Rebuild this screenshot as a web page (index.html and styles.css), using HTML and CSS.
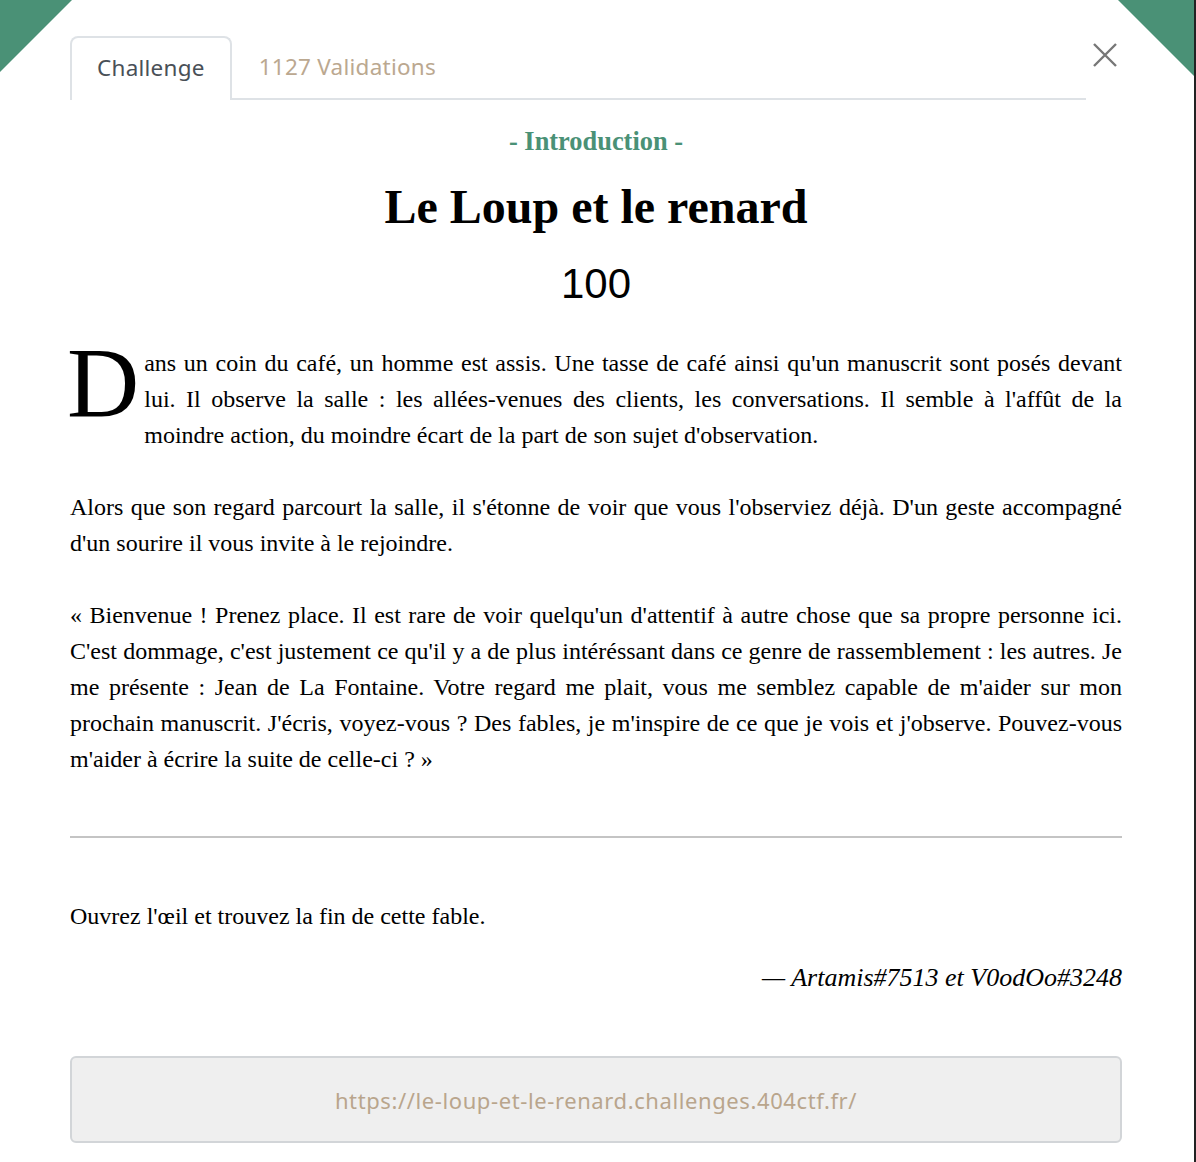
FILE: index.html
```html
<!DOCTYPE html>
<html lang="fr">
<head>
<meta charset="utf-8">
<link rel="stylesheet" href="styles.css">
</head>
<body>
<div class="page">
  <div class="corner corner-left"></div>
  <div class="corner corner-right"></div>
  <div class="modal">
    <div class="header">
      <ul class="tabs">
        <li class="tab active">Challenge</li>
        <li class="tab">1127 Validations</li>
      </ul>
      <button class="close" aria-label="Fermer">
        <svg width="26" height="26" viewBox="0 0 26 26"><path d="M2 2 L24 24 M24 2 L2 24" stroke="#777" stroke-width="2.4" fill="none"/></svg>
      </button>
    </div>
    <div class="category">- Introduction -</div>
    <h1 class="title">Le Loup et le renard</h1>
    <div class="points">100</div>
    <div class="story">
      <p class="first"><span class="dropcap">D</span>ans un coin du café, un homme est assis. Une tasse de café ainsi qu'un manuscrit sont posés devant lui. Il observe la salle : les allées-venues des clients, les conversations. Il semble à l'affût de la moindre action, du moindre écart de la part de son sujet d'observation.</p>
      <p>Alors que son regard parcourt la salle, il s'étonne de voir que vous l'observiez déjà. D'un geste accompagné d'un sourire il vous invite à le rejoindre.</p>
      <p>« Bienvenue ! Prenez place. Il est rare de voir quelqu'un d'attentif à autre chose que sa propre personne ici. C'est dommage, c'est justement ce qu'il y a de plus intéréssant dans ce genre de rassemblement : les autres. Je me présente : Jean de La Fontaine. Votre regard me plait, vous me semblez capable de m'aider sur mon prochain manuscrit. J'écris, voyez-vous ? Des fables, je m'inspire de ce que je vois et j'observe. Pouvez-vous m'aider à écrire la suite de celle-ci ? »</p>
    </div>
    <hr class="sep">
    <p class="task">Ouvrez l'œil et trouvez la fin de cette fable.</p>
    <p class="author">— Artamis#7513 et V0odOo#3248</p>
    <div class="link">https://le-loup-et-le-renard.challenges.404ctf.fr/</div>
  </div>
</div>
</body>
</html>
```

FILE: styles.css
```css
html, body {
  margin: 0;
  padding: 0;
  background: #fff;
}
.page {
  position: relative;
  width: 1196px;
  height: 1162px;
  overflow: hidden;
  box-sizing: border-box;
  border-right: 2px solid #222;
  background: #fff;
}
.corner {
  position: absolute;
  top: 0;
  width: 76px;
  height: 76px;
  background: #4a9176;
}
.corner-left {
  left: 0;
  width: 72px;
  height: 72px;
  clip-path: polygon(0 0, 100% 0, 0 100%);
}
.corner-right {
  right: 0;
  clip-path: polygon(0 0, 100% 0, 100% 100%);
}
.modal {
  padding: 36px 72px 0 70px;
}
.header {
  display: flex;
  align-items: flex-start;
}
.tabs {
  list-style: none;
  margin: 0;
  padding: 0;
  display: flex;
  width: 1016px;
  border-bottom: 2px solid #dee2e6;
  font-family: "Noto Sans", "Open Sans", sans-serif;
  font-size: 22.5px;
  letter-spacing: 0.25px;
}
.tab {
  height: 62px;
  box-sizing: border-box;
  padding: 0 25px 4px;
  display: flex;
  align-items: center;
  color: #bba890;
  border: 2px solid transparent;
  border-bottom: none;
  border-radius: 8px 8px 0 0;
  margin-bottom: -2px;
}
.tab.active {
  color: #495057;
  border-color: #dee2e6;
  background: #fff;
  height: 64px;
}
.close {
  margin: 6px 0 0 6px;
  padding: 0;
  border: none;
  background: none;
  width: 26px;
  height: 26px;
  line-height: 0;
}
.category {
  margin-top: 27px;
  text-align: center;
  font-family: "Liberation Serif", "Times New Roman", serif;
  font-weight: bold;
  font-size: 26.4px;
  color: #4a9176;
  line-height: 28px;
}
.title {
  margin: 24px 0 0;
  text-align: center;
  font-family: "Liberation Serif", "Times New Roman", serif;
  font-weight: bold;
  font-size: 48px;
  line-height: 56px;
  color: #000;
}
.points {
  margin-top: 26px;
  text-align: center;
  font-family: "Liberation Sans", Arial, sans-serif;
  font-size: 42px;
  line-height: 46px;
  color: #000;
}
.story {
  margin-top: 38px;
  font-family: "Liberation Serif", "Times New Roman", serif;
  font-size: 24px;
  line-height: 36px;
  color: #000;
  text-align: justify;
}
.story p {
  margin: 0 0 36px;
}
.dropcap {
  float: left;
  font-size: 100px;
  line-height: 74px;
  margin: 0 5px 0 -3px;
  padding-top: 1px;
}
.sep {
  margin: 59px 0 0;
  border: none;
  border-top: 2px solid #c4c4c4;
}
.task {
  margin: 60px 0 0;
  font-family: "Liberation Serif", "Times New Roman", serif;
  font-size: 24px;
  line-height: 36px;
}
.author {
  margin: 26px 0 0;
  text-align: right;
  font-family: "Liberation Serif", "Times New Roman", serif;
  font-style: italic;
  font-size: 26px;
  line-height: 36px;
}
.link {
  margin-top: 60px;
  height: 87px;
  box-sizing: border-box;
  border: 2px solid #d2d5d8;
  border-radius: 6px;
  background: #efefef;
  display: flex;
  align-items: center;
  justify-content: center;
  font-family: "Noto Sans", "Open Sans", sans-serif;
  font-size: 22px;
  color: #b9a58c;
  letter-spacing: 0.6px;
}
```
